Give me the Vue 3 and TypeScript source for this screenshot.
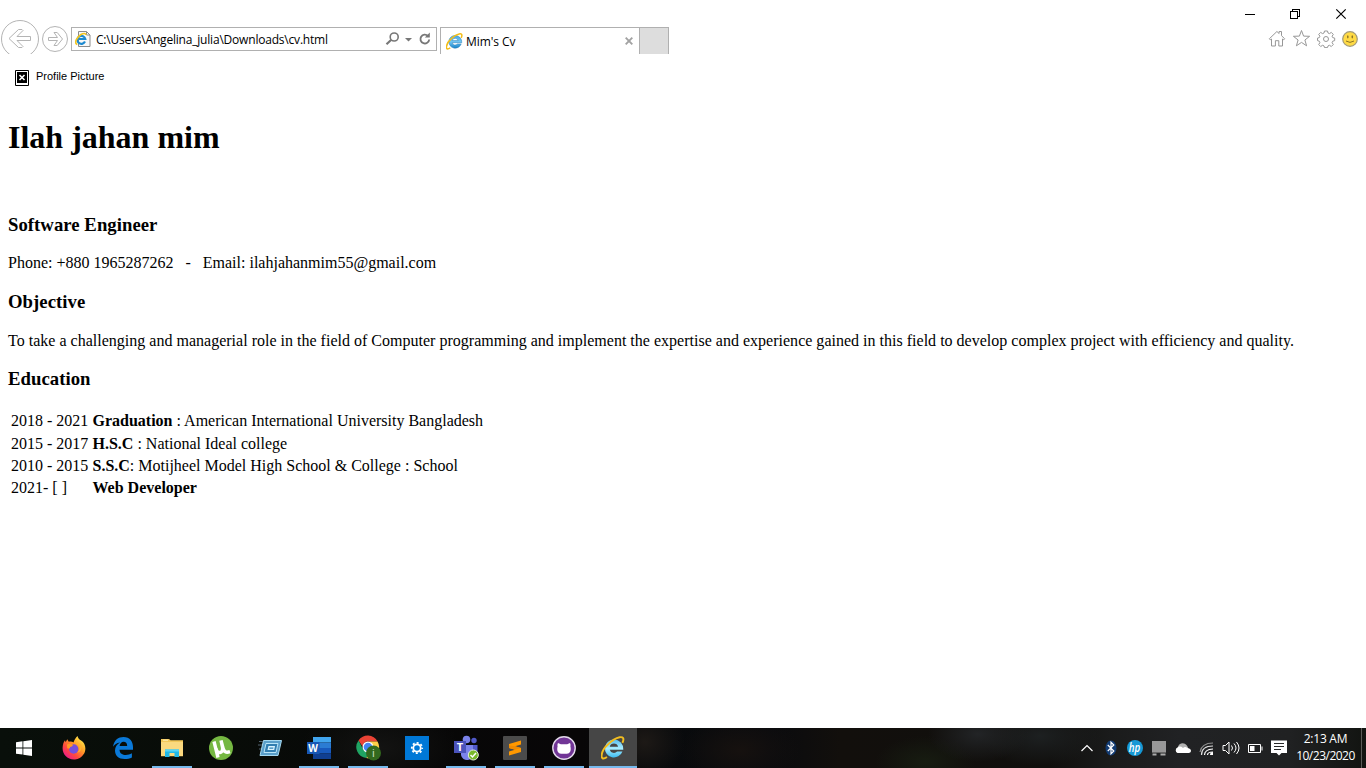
<script setup lang="ts">
interface Degree {
  years: string
  title: string
  detail: string
}

interface App {
  id: string
  name: string
  open: boolean
}

const address = 'C:\\Users\\Angelina_julia\\Downloads\\cv.html'

const degrees: Degree[] = [
  { years: '2018 - 2021', title: 'Graduation', detail: ' : American International University Bangladesh' },
  { years: '2015 - 2017', title: 'H.S.C', detail: ' : National Ideal college' },
  { years: '2010 - 2015', title: 'S.S.C', detail: ': Motijheel Model High School & College : School' },
  { years: '2021- [ ]', title: 'Web Developer', detail: '' },
]

const apps: App[] = [
  { id: 'firefox', name: 'Firefox', open: false },
  { id: 'edge', name: 'Edge', open: false },
  { id: 'explorer', name: 'File Explorer', open: true },
  { id: 'torrent', name: 'Torrent', open: false },
  { id: 'run', name: 'Run', open: false },
  { id: 'word', name: 'Word', open: true },
  { id: 'chrome', name: 'Chrome', open: true },
  { id: 'settings', name: 'Settings', open: false },
  { id: 'teams', name: 'Teams', open: true },
  { id: 'sublime', name: 'Sublime Text', open: true },
  { id: 'github', name: 'GitHub Desktop', open: true },
  { id: 'ie', name: 'Internet Explorer', open: true },
]
</script>

<template>
  <div class="screen">
    <header class="browser-bar">
      <nav class="history">
        <svg class="back" width="40" height="36" viewBox="0 0 40 36">
          <g fill="none" stroke="#b4b4b4">
            <circle cx="20" cy="21" r="18.5" />
            <path d="M18.500 11.500h3.500l1 1-6 6H30.500v4H17l6 6-1 1h-3.500L9 20.500z" />
          </g>
        </svg>
        <svg class="forward" width="28" height="28" viewBox="0 0 28 28">
          <g fill="none" stroke="#b4b4b4">
            <circle cx="14" cy="14" r="12.500" />
            <path d="M13 7.500h3.200l5.300 6.500-5.300 6.500H13l3.500-5h-9v-3h9z" />
          </g>
        </svg>
      </nav>
      <div class="address">
        <svg width="16" height="16" viewBox="0 0 16 16">
          <path d="M3.500.5h8l3.500 3.500v11.500H3.500z" fill="#f8f8f8" stroke="#8c8c8c" />
          <path d="M11.500.5v3.500h3.500" fill="none" stroke="#8c8c8c" />
          <path d="M10 10.600A4 4 0 1 1 10.300 8H3.800" fill="none" stroke="#1d8ad0" stroke-width="2.200" />
          <path d="M2.300 13.500C-1.500 12 2 6 6 3.500 8.500 2 11 2 11 4" fill="none" stroke="#f4c51c" stroke-width="1.600" />
        </svg>
        <span class="url">{{ address }}</span>
        <svg class="tools" width="48" height="16" viewBox="0 0 48 16">
          <circle cx="9.200" cy="6" r="4" fill="none" stroke="#777" stroke-width="1.600" />
          <path d="M6.300 8.800 1.500 13.200" stroke="#777" stroke-width="2.200" />
          <path d="M20 7h7l-3.500 3.500z" fill="#777" />
          <path d="M43 5A4.400 4.400 0 1 0 44.200 8.500" fill="none" stroke="#777" stroke-width="1.900" />
          <path d="M44.800 1.500v5h-5z" fill="#777" />
        </svg>
      </div>
      <div class="tab">
        <svg width="17" height="17" viewBox="0 0 28 28">
          <defs>
            <linearGradient id="ie-tab" x2="0" y2="1">
              <stop offset="0" stop-color="#4ba6de" />
              <stop offset=".5" stop-color="#72c6f3" />
              <stop offset="1" stop-color="#1681c6" />
            </linearGradient>
          </defs>
          <path d="M15 4a10.500 10.500 0 1 0 10 14h-6.200a5 5 0 0 1-8.600-2H26A11 11 0 0 0 15 4zm-4.800 8.500a5 5 0 0 1 9.700 0z" fill="url(#ie-tab)" stroke="#257eb8" stroke-width=".8" />
          <path d="M7 24.500C-3 31 0 17 8 10 17 1 30-3 25 8" fill="none" stroke="#f3bd18" stroke-width="2.500" />
        </svg>
        <span class="tab-title">Mim's Cv</span>
        <svg class="tab-close" width="8" height="8" viewBox="0 0 8 8">
          <path d="M.7.7l6.600 6.600M7.300.7.7 7.300" stroke="#a2a2a2" stroke-width="1.900" />
        </svg>
      </div>
      <div class="new-tab"></div>
      <div class="window-side">
        <svg class="controls" width="112" height="28" viewBox="0 0 112 28">
          <g fill="none" stroke="#000" shape-rendering="crispEdges">
            <path d="M4 14.500h10" />
            <path d="M49.500 11.500h7v7h-7zM51.500 11V9.500h7v7H57" />
          </g>
          <path d="M95.300 9.300l9.400 9.400M104.700 9.300l-9.400 9.400" stroke="#000" stroke-width="1.200" />
        </svg>
        <svg class="commands" width="98" height="20" viewBox="0 0 98 20">
          <g fill="none" stroke="#979797" stroke-width="1">
            <path d="M1.300 10.800 8.900 3.500l2.200 2V3.500h2.400v4.200l3.200 3.100-1 1-1.200-.8v7h-3.700v-5.300H7.400V18H3.500v-7l-1.200.8z" />
            <path d="M33.500 2.500l2.100 5.600 6 .2-4.700 3.700 1.700 5.800-5.100-3.400-5.100 3.400 1.700-5.800-4.700-3.700 6-.2z" />
            <path d="M56.500 3h3l.5 2 1.500.6 1.800-1.200 2 2-1.200 1.800.6 1.400 2 .5v2.500l-2 .6-.6 1.500 1.200 1.800-2 2-1.800-1.200-1.500.6-.5 1.700h-3l-.5-1.700-1.500-.6-1.800 1.200-2-2 1.200-1.800-.6-1.500-1.800-.6v-2.500l1.800-.5.6-1.400-1.200-1.800 2-2 1.800 1.200 1.500-.6z" />
            <circle cx="58" cy="11" r="2.500" />
          </g>
          <circle cx="82" cy="11" r="7.300" fill="#ffda45" stroke="#a29a79" stroke-width="1.200" />
          <ellipse cx="79.800" cy="8.800" rx=".8" ry="1.600" fill="#8a7426" />
          <ellipse cx="84.300" cy="8.800" rx=".8" ry="1.600" fill="#8a7426" />
          <path d="M78 13q4 2.800 8 0" fill="none" stroke="#8a7426" />
        </svg>
      </div>
    </header>

    <main class="cv">
      <div class="picture">
        <svg width="14" height="16" viewBox="0 0 14 16">
          <path d="M.5.5h13v15H.5z" fill="#fff" stroke="#000" />
          <path d="M2 2h10v11H2z" fill="#000" />
          <path d="M4.500 5l5 5M9.500 5l-5 5" stroke="#fff" stroke-width="1.600" />
        </svg>
        <span>Profile Picture</span>
      </div>
      <h1>Ilah jahan mim</h1>
      <h3 class="role">Software Engineer</h3>
      <p class="contact">Phone: +880 1965287262 &nbsp; - &nbsp; Email: ilahjahanmim55@gmail.com</p>
      <h3 class="objective">Objective</h3>
      <p class="goal">To take a challenging and managerial role in the field of Computer programming and implement the expertise and experience gained in this field to develop complex project with efficiency and quality.</p>
      <h3 class="education">Education</h3>
      <div class="degrees">
        <div v-for="d in degrees" :key="d.years" class="degree">
          <span class="years">{{ d.years }}</span>
          <span class="what"><b>{{ d.title }}</b>{{ d.detail }}</span>
        </div>
      </div>
    </main>

    <footer class="taskbar">
      <div class="start">
        <svg width="16" height="16" viewBox="0 0 16 16" fill="#fff">
          <path d="M0 2.200 6.500 1.300v6.200H0zM7.300 1.200 16 0v7.500H7.300zM0 8.400h6.500v6.200L0 13.700zM7.300 8.400H16V16l-8.700-1.200z" />
        </svg>
      </div>

      <div v-for="a in apps" :key="a.id" class="app" :class="{ open: a.open, active: a.id === 'ie' }" :title="a.name">
        <svg v-if="a.id === 'firefox'" width="24" height="24" viewBox="0 0 24 24">
          <defs>
            <linearGradient id="fox" x1=".9" y1=".1" x2=".2" y2=".9">
              <stop offset="0" stop-color="#fff04c" />
              <stop offset=".4" stop-color="#ff9a26" />
              <stop offset=".72" stop-color="#ff4a3d" />
              <stop offset="1" stop-color="#ed2081" />
            </linearGradient>
          </defs>
          <path d="M15.500 0c.5 2 1.800 3.500 3.600 4.500 5 3 5.200 9.500 2.700 13.600C19.500 22 15.500 24 12 23.500 5 23.300.5 18 .6 12 .7 8.700 1.500 6 3 4.200l.7 2 1.500-3 1.600 2.600c2-.5 3.700 0 4.700.7C12 4.500 13.500 2 15.500 0z" fill="url(#fox)" />
          <circle cx="11.700" cy="13" r="4.700" fill="#7650dc" />
          <path d="M5 8.500c2-1 4.500-.8 6 .3-.2 1.700-2 2-3 2.400.3 1.400-1.500 1.800-2.800 1z" fill="#ff9a24" />
          <path d="M16 8c2.500 3 1.800 7-1 8.800 4-.8 5.800-5 3.500-8.300C17.300 6.500 15 6 14 6.500z" fill="#ffb12f" />
        </svg>

        <svg v-else-if="a.id === 'edge'" width="22" height="22" viewBox="0 0 22 22">
          <path d="M1 9.800C2 3 6.300 0 11.500 0 18 0 21 4.700 21 10v2.800H7.500c.2 4 3.200 5.200 6.200 5.200 2.400 0 4.300-.7 6.200-1.700v4.200C17.800 21.600 15.400 22 12.600 22 6.700 22 3 18.500 3 13.500c0-3.600 2-6.400 5-8-3.300.4-5.500 2-7 4.300zm6.600-.9h7.600c0-2.700-1.500-4.100-3.600-4.100-2.200 0-3.600 1.700-4 4.100z" fill="#0a79d8" />
        </svg>

        <svg v-else-if="a.id === 'explorer'" width="22" height="18" viewBox="0 0 22 18">
          <path d="M0 0h8l1.500 1.200H22v16H0z" fill="#f3c85a" />
          <path d="M0 3h22v14H0z" fill="#fbd97f" />
          <path d="M2 1.200h5" stroke="#fff1bb" />
          <path d="M4 18V10.500h14V18h-4.500v-4h-5v4z" fill="#22b9e8" />
          <path d="M4 10.500h14v2H4z" fill="#57d5f7" />
        </svg>

        <svg v-else-if="a.id === 'torrent'" width="24" height="24" viewBox="0 0 24 24">
          <circle cx="12" cy="12" r="12" fill="#75b842" />
          <path d="M5 5.500 9 21.500M7 12.500c1 6 7.500 5 6.500-1L12 4.500l2 7.500c1 4 3 5 7 3.700" fill="none" stroke="#fff" stroke-width="3.400" />
        </svg>

        <svg v-else-if="a.id === 'run'" width="24" height="18" viewBox="0 0 24 18">
          <path d="M5.500 1.500h18l-3.500 15H2z" fill="#5a9fca" stroke="#a4d8f0" />
          <path d="M8 4.500h12l-2 9H6z" fill="#317eb1" stroke="#b9e4f7" />
          <path d="M10.500 7h6.500l-.8 4H9.500z" fill="#d8f3ff" />
          <path d="M11.500 8.500h4l-.3 1.200h-4z" fill="#3383b6" />
          <path d="M1 2.500h4M0 6h4M1 10h2" stroke="#52636f" />
        </svg>

        <svg v-else-if="a.id === 'word'" width="24" height="22" viewBox="0 0 24 22">
          <path d="M6 0h18v5.500H6z" fill="#41a5ee" />
          <path d="M6 5.500h18V11H6z" fill="#2b7cd3" />
          <path d="M6 11h18v5.500H6z" fill="#185abd" />
          <path d="M6 16.500h18V22H6z" fill="#103f91" />
          <path d="M0 5h12.500v12H0z" fill="#1857b4" />
          <text x="6.200" y="14.600" class="mark" font-size="10">W</text>
        </svg>

        <svg v-else-if="a.id === 'chrome'" width="26" height="26" viewBox="0 0 26 26">
          <path d="M3.500 5.500A11 11 0 0 1 22.500 6.500H13A5.500 5.500 0 0 0 7.500 11.500z" fill="#ea4335" />
          <path d="M3.500 5.500A11 11 0 0 0 11.300 23l4-6.500A5.500 5.500 0 0 1 8 14z" fill="#1fa463" />
          <path d="M22.500 6.500A11 11 0 0 1 11.300 23l5.200-8A5.500 5.500 0 0 0 14 6.500z" fill="#fdd04a" />
          <circle cx="13" cy="12" r="5.500" fill="#fff" />
          <circle cx="13" cy="12" r="4.300" fill="#4285f4" />
          <circle cx="18.500" cy="18" r="7.500" fill="#33691e" />
          <text x="18.500" y="22" class="mark light" font-size="11">i</text>
        </svg>

        <svg v-else-if="a.id === 'settings'" width="24" height="24" viewBox="0 0 24 24">
          <path d="M0 0h24v24H0z" fill="#0078d7" />
          <circle cx="12" cy="12" r="3.700" fill="none" stroke="#fff" stroke-width="1.800" />
          <circle cx="12" cy="12" r="5.200" fill="none" stroke="#fff" stroke-width="1.800" stroke-dasharray="2 2.084" stroke-dashoffset="1" />
        </svg>

        <svg v-else-if="a.id === 'teams'" width="26" height="26" viewBox="0 0 26 26">
          <circle cx="13.500" cy="4.500" r="3.800" fill="#7b83eb" />
          <circle cx="21" cy="5.500" r="2.700" fill="#5059c9" />
          <path d="M16 10h8.500v7a4.500 4.500 0 0 1-8.500 2z" fill="#5059c9" />
          <path d="M8 10h12v8a6 6 0 0 1-12 2z" fill="#7b83eb" />
          <path d="M1 6h12v12H1z" fill="#4b53bc" />
          <text x="7" y="16" class="mark" font-size="11">T</text>
          <circle cx="20.300" cy="20" r="5" fill="#78b82a" stroke="#e4efd7" />
          <path d="M17.500 20l2 2 3.500-4" fill="none" stroke="#fff" stroke-width="1.500" />
        </svg>

        <svg v-else-if="a.id === 'sublime'" width="24" height="24" viewBox="0 0 24 24">
          <rect width="24" height="24" rx="1" fill="#4b4b4b" />
          <path d="M6 8 18 4.500v4l-6 1.700 6 1.800v4L6 19.500v-4l6-1.700L6 12z" fill="#ff9800" />
          <path d="M6 12V9.500l6 .7 6 1.800-6 1.800z" fill="#f08a00" />
        </svg>

        <svg v-else-if="a.id === 'github'" width="24" height="24" viewBox="0 0 24 24">
          <circle cx="12" cy="12" r="11.200" fill="#713596" stroke="#e2d9e9" stroke-width="1.400" />
          <path d="M6 7l2.800 1.300h6.400L18 7c.7 1.300.6 2.500.4 3.300 1.200 4.700-.7 7.500-3.400 7.500H9c-2.700 0-4.600-2.800-3.400-7.500C5.400 9.500 5.300 8.300 6 7z" fill="#fff" />
        </svg>

        <svg v-else width="24" height="24" viewBox="0 0 28 28">
          <defs>
            <linearGradient id="ie-bar" x2="0" y2="1">
              <stop offset="0" stop-color="#57bdf0" />
              <stop offset=".5" stop-color="#a8edff" />
              <stop offset="1" stop-color="#3ebcf1" />
            </linearGradient>
          </defs>
          <path d="M15 4a10.500 10.500 0 1 0 10 14h-6.200a5 5 0 0 1-8.600-2H26A11 11 0 0 0 15 4zm-4.800 8.500a5 5 0 0 1 9.700 0z" fill="url(#ie-bar)" />
          <path d="M7 24.500C-3 31 0 17 8 10 17 1 30-3 25 8" fill="none" stroke="#f2bd20" stroke-width="2.300" />
        </svg>
      </div>

      <div class="tray">
        <svg width="24" height="40" viewBox="0 0 24 40"><path d="M6.500 23l5.500-5.500 5.500 5.500" fill="none" stroke="#fff" stroke-width="1.200" /></svg>
        <svg width="24" height="40" viewBox="0 0 24 40">
          <ellipse cx="12" cy="20" rx="5.500" ry="7.500" fill="#123b72" />
          <path d="M8.800 17l6 6-2.800 2.800V14.200l2.800 2.800-6 6" fill="none" stroke="#fff" stroke-width="1.200" />
        </svg>
        <svg width="24" height="40" viewBox="0 0 24 40">
          <circle cx="12" cy="20" r="8" fill="#1598d5" />
          <text x="11.500" y="24" class="mark hp" font-size="12.500" textLength="11.500" lengthAdjust="spacingAndGlyphs">hp</text>
        </svg>
        <svg width="24" height="40" viewBox="0 0 24 40">
          <path d="M5 13h14v11H5z" fill="#989898" />
          <path d="M5.500 26.500h4M13.500 26.500h5" stroke="#aaa" stroke-width="2" />
          <path d="M5 24.500h14" stroke="#666" />
        </svg>
        <svg width="24" height="40" viewBox="0 0 24 40">
          <path d="M7 22a5 5 0 0 1 9.500-3.500L19 24H7z" fill="#b2b2b2" />
          <path d="M6.500 25a3 3 0 0 1 0-5.500Q9 17.500 12 20q2-2 4.500 0 3.500.7 3.500 3 0 1.700-2 2z" fill="#fff" />
        </svg>
        <svg width="24" height="40" viewBox="0 0 24 40">
          <g fill="none" stroke="#fff" stroke-width="1.200">
            <path d="M9.500 27Q9.500 21.500 18 21M12.500 27Q12.500 24 18 24" />
            <path d="M6.500 27Q6.500 18 18 18" stroke="#ddd" />
            <path d="M5 24Q6.500 15 18 15" stroke="#8e8e8e" />
          </g>
          <path d="M18 24v3h-3q0-3 3-3z" fill="#fff" />
        </svg>
        <svg width="24" height="40" viewBox="0 0 24 40">
          <path d="M4 17.500h2.500L10 14v12l-3.500-3.500H4z" fill="none" stroke="#fff" />
          <path d="M12.500 17.500q2 2.500 0 5M15 15.500q4 4.500 0 9M17.500 14q5 6 0 12" fill="none" stroke="#fff" />
        </svg>
        <svg width="24" height="40" viewBox="0 0 24 40">
          <path d="M5.500 16.500h12v8h-12z" fill="none" stroke="#fff" />
          <path d="M7 18h4.500v5H7zM18.500 18.500h1v4h-1z" fill="#fff" />
        </svg>
        <svg width="24" height="40" viewBox="0 0 24 40">
          <path d="M4 12.500h16V25h-5.500L12 27.500 9.500 25H4z" fill="#fff" />
          <path d="M7 15.500h10M7 18.500h10M7 21.500h7" stroke="#292929" />
        </svg>
      </div>
      <div class="clock">
        <span class="time">2:13 AM</span>
        <span class="date">10/23/2020</span>
      </div>
      <div class="peek"></div>
    </footer>
  </div>
</template>

<style>
html,
body {
  margin: 0;
  background: #fff;
  overflow: hidden;
}
</style>

<style scoped>
.screen {
  display: flex;
  flex-direction: column;
  width: 1366px;
  height: 768px;
  background: #fff;
  color: #000;
  overflow: hidden;
}
.screen svg {
  display: block;
  flex: none;
}
.browser-bar {
  display: flex;
  flex: none;
  height: 54px;
  font: 12px/16px 'Open Sans', 'Noto Sans', sans-serif;
}
.history {
  display: flex;
  width: 71px;
  overflow: hidden;
}
.back {
  margin-top: 18px;
}
.forward {
  margin: 25px 0 0 1px;
}
.address {
  display: flex;
  align-items: center;
  box-sizing: border-box;
  width: 366px;
  height: 24px;
  margin-top: 27px;
  padding: 0 3px;
  border: 1px solid #b0b0b0;
}
.url {
  margin-left: 5px;
  padding-top: 2px;
  white-space: nowrap;
  letter-spacing: -0.2px;
}
.tools {
  margin-left: auto;
}
.tab {
  display: flex;
  align-items: center;
  box-sizing: border-box;
  width: 200px;
  height: 27px;
  margin: 27px 0 0 3px;
  padding: 0 5px;
  border: 1px solid #b0b0b0;
  border-bottom: 0;
}
.tab-title {
  margin-left: 3px;
  letter-spacing: -0.05px;
  white-space: nowrap;
  padding-top: 2px;
}
.tab-close {
  margin: 0 1px 0 auto;
}
.new-tab {
  box-sizing: border-box;
  width: 29px;
  height: 27px;
  margin-top: 27px;
  border: 1px solid #b0b0b0;
  border-width: 1px 1px 0 0;
  background: #ddd;
}
.window-side {
  display: flex;
  flex-direction: column;
  align-items: flex-end;
  margin-left: auto;
}
.controls {
  margin-right: 13px;
}
.cv {
  display: flex;
  flex-direction: column;
  flex: 1;
  padding: 0 8px;
  font: 16px/18px 'Liberation Serif', 'Times New Roman', serif;
}
.picture {
  display: flex;
  align-items: flex-start;
  gap: 7px;
  height: 49px;
  margin: 16px 0 0 7px;
  font: 11px/13px 'Liberation Sans', Arial, sans-serif;
}
h1,
h3,
p {
  margin: 0;
  white-space: nowrap;
}
h1 {
  height: 36px;
  font-size: 32px;
  line-height: 36px;
}
h3 {
  height: 22px;
  font-size: 18.72px;
  line-height: 22px;
  letter-spacing: 0.04px;
}
.role {
  margin-top: 59px;
}
.contact {
  margin-top: 18px;
}
.objective {
  margin-top: 19px;
}
.goal {
  margin-top: 19px;
  letter-spacing: 0.011px;
}
.education {
  margin-top: 18px;
}
.degrees {
  display: grid;
  grid-template-rows: 23px 22px 22px 22px;
  margin: 22px 0 0 3px;
}
.degree {
  display: flex;
  white-space: pre;
}
.years {
  width: 81.500px;
}
.taskbar {
  display: flex;
  flex: none;
  height: 40px;
  background:
    radial-gradient(ellipse 50px 28px at 978px 6px, #222426, transparent),
    radial-gradient(ellipse 60px 30px at 1040px 8px, #1d2021, transparent),
    radial-gradient(ellipse 50px 26px at 925px 34px, #171c11, transparent),
    radial-gradient(ellipse 40px 35px at 645px 14px, #1d1916, transparent),
    radial-gradient(ellipse 60px 35px at 740px 22px, #16110f, transparent),
    radial-gradient(ellipse 80px 40px at 380px 20px, #131312, transparent),
    linear-gradient(90deg, #090f0a 0, #080c08 220px, #070707 420px, #080607 580px, #080a0c 650px, #0a0b0e 770px, #120f0c 840px, #100f0d 1050px, #1a1b1b 1110px, #212224 1180px, #202122 1290px, #121411 1366px);
  font: 12px/17px 'Open Sans', 'Noto Sans', sans-serif;
  color: #fff;
}
.start,
.app {
  display: flex;
  align-items: center;
  justify-content: center;
  box-sizing: border-box;
  width: 48px;
}
.start {
  margin-right: 1px;
}
.app {
  position: relative;
  margin-left: 1px;
}
.open::after {
  content: '';
  position: absolute;
  bottom: 0;
  left: 4px;
  width: 40px;
  height: 2px;
  background: #76b9ed;
}
.active {
  background: #464646;
}
.active::after {
  left: 0;
  width: 48px;
}
.mark {
  fill: #fff;
  font-family: 'Open Sans', sans-serif;
  font-weight: 700;
  text-anchor: middle;
}
.light {
  fill: #d5e2ce;
  font-weight: 400;
}
.hp {
  font-style: italic;
  font-weight: 600;
}
.tray {
  display: flex;
  margin-left: auto;
}
.clock {
  display: flex;
  flex-direction: column;
  align-items: center;
  box-sizing: border-box;
  width: 70px;
  padding: 2px 1px 0 0;
  white-space: nowrap;
  letter-spacing: -0.250px;
}
.date {
  letter-spacing: -0.5px;
}
.peek {
  box-sizing: border-box;
  width: 5px;
  border-left: 1px solid #5a5b58;
}
</style>
